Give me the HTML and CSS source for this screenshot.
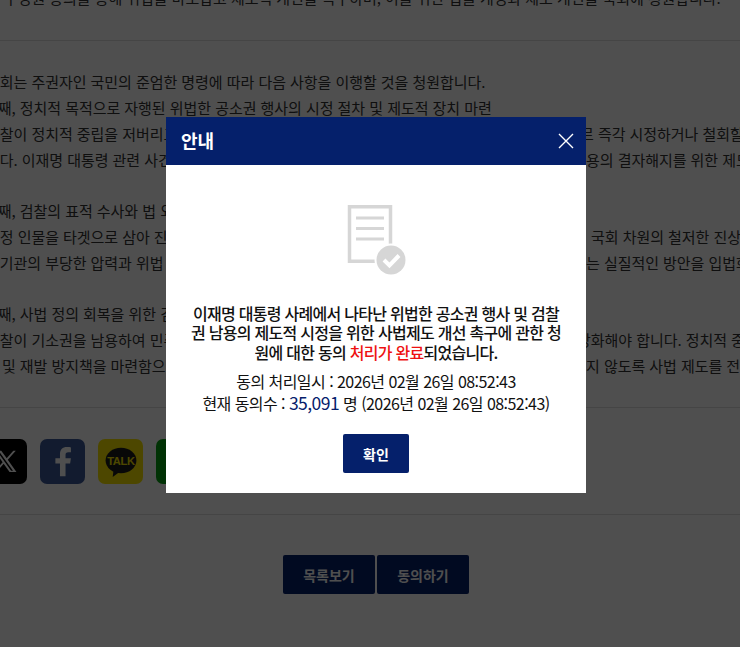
FILE: index.html
```html
<!DOCTYPE html>
<html lang="ko">
<head>
<meta charset="utf-8">
<title>안내</title>
<link rel="stylesheet" href="styles.css">
</head>
<body>
<main class="page">
  <p class="intro">이 구성원 동의를 통해 위법을 바로잡고 제도적 개선을 촉구하며, 이를 위한 법률 개정과 제도 개선을 국회에 청원합니다.</p>
  <hr class="rule">
  <section class="petition">
    <div class="row"><span class="left">국회는 주권자인 국민의 준엄한 명령에 따라 다음 사항을 이행할 것을 청원합니다.</span></div>
    <div class="row"><span class="left pull">첫째, 정치적 목적으로 자행된 위법한 공소권 행사의 시정 절차 및 제도적 장치 마련</span></div>
    <div class="row"><span class="left">검찰이 정치적 중립을 저버리고</span><span class="right shift-a">르 즉각 시정하거나 철회할</span></div>
    <div class="row"><span class="left">니다. 이재명 대통령 관련 사건</span><span class="right">용의 결자해지를 위한 제도</span></div>
    <div class="row gap"><span class="left pull">둘째, 검찰의 표적 수사와 법 외</span></div>
    <div class="row"><span class="left">특정 인물을 타겟으로 삼아 진</span><span class="right shift-b">국회 차원의 철저한 진상</span></div>
    <div class="row"><span class="left">사기관의 부당한 압력과 위법</span><span class="right">는 실질적인 방안을 입법화</span></div>
    <div class="row gap"><span class="left pull">셋째, 사법 정의 회복을 위한 검</span></div>
    <div class="row"><span class="left">검찰이 기소권을 남용하여 민주</span><span class="right shift-c">강화해야 합니다. 정치적 중</span></div>
    <div class="row"><span class="left pull">명 및 재발 방지책을 마련함으</span><span class="right">지 않도록 사법 제도를 전면</span></div>
  </section>
  <hr class="rule rule-share">
  <nav class="share" aria-label="공유">
    <a class="sns sns-x"><svg viewBox="0 0 24 24" width="32" height="32"><path d="M4 3.500h5.200l4.100 5.700 4.900-5.700h1.900l-6 6.900 6.500 9.100h-5.200l-4.400-6.100-5.300 6.100H3.800l6.400-7.300zM6.800 5l9.800 13.500h1.400L8.200 5z" fill="#fff"/></svg></a>
    <a class="sns sns-fb"><svg viewBox="0 0 24 24" width="38" height="38"><path d="M13.600 21v-8h2.900l.5-3.400h-3.400V7.500c0-1 .4-1.700 1.800-1.700H17V2.800c-.4-.1-1.400-.2-2.600-.2-2.600 0-4.300 1.600-4.300 4.400v2.600H7.200V13h2.900v8z" fill="#fff"/></svg></a>
    <a class="sns sns-kakao"><svg viewBox="0 0 32 32" width="34" height="34"><ellipse cx="16" cy="14.500" rx="14.500" ry="12" fill="#1c1c1c"/><path d="M9 23l-.8 7 7-5z" fill="#1c1c1c"/><text x="16" y="18.500" text-anchor="middle" class="talk">TALK</text></svg></a>
    <a class="sns sns-line"></a>
  </nav>
  <hr class="rule rule-actions">
  <div class="actions">
    <button class="btn" type="button">목록보기</button>
    <button class="btn" type="button">동의하기</button>
  </div>
</main>
<div class="overlay"></div>
<div class="modal" role="dialog">
  <header class="modal-head">
    <h2 class="modal-title">안내</h2>
    <svg class="close" viewBox="0 0 16 16" width="16" height="16"><path d="M1 1l14 14M15 1L1 15" stroke="#fff" stroke-width="1.400" fill="none"/></svg>
  </header>
  <div class="modal-body">
    <svg class="doc" viewBox="0 0 60 70" width="60" height="70">
      <rect x="3.500" y="1.750" width="41" height="54.500" fill="none" stroke="#d6d6d6" stroke-width="3.500"/>
      <path d="M10 13h28M10 23.500h28M10 34h28" stroke="#d6d6d6" stroke-width="3" fill="none"/>
      <circle cx="45" cy="55" r="16.500" fill="#fff"/>
      <circle cx="45" cy="55" r="14.500" fill="#d6d6d6"/>
      <path d="M38 55l5.500 5.500 9.500-10" stroke="#fff" stroke-width="4" fill="none"/>
    </svg>
    <p class="msg">이재명 대통령 사례에서 나타난 위법한 공소권 행사 및 검찰권 남용의 제도적 시정을 위한 사법제도 개선 촉구에 관한 청원에 대한 동의 <em class="done">처리가 완료</em>되었습니다.</p>
    <p class="info">동의 처리일시 : 2026년 02월 26일 08:52:43<br>현재 동의수 : <span class="count">35,091</span> 명 (2026년 02월 26일 08:52:43)</p>
    <button class="ok" type="button">확인</button>
  </div>
</div>
</body>
</html>
```
FILE: styles.css
```css
* { box-sizing: border-box; }
html, body { margin: 0; height: 647px; overflow: hidden; background: #fff; }
body { font-family: "Noto Sans CJK KR", "Noto Sans", sans-serif; color: #333; font-variant-ligatures: none; font-feature-settings: "calt" 0, "liga" 0; }
.page { width: 780px; margin-left: -14px; margin-top: -15px; }
.intro { margin: 0; font-size: 15px; line-height: 26px; white-space: nowrap; height: 26px; letter-spacing: -.05px; }
.rule { border: 0; border-top: 1px solid #ddd; margin: 29px 0 0; }
.petition { margin-top: 28px; font-size: 15px; line-height: 26px; letter-spacing: -.05px; }
.row { display: grid; grid-template-columns: 600px auto; height: 26px; white-space: nowrap; }
.gap { margin-top: 25px; }
.pull { margin-left: -2px; }
.shift-a { margin-left: -6px; }
.shift-b { margin-left: 5px; }
.shift-c { margin-left: -9px; }
.rule-share { margin-top: 28px; }
.share { display: flex; gap: 13px; margin: 31px 0 0 -4px; }
.sns { width: 45px; height: 45px; border-radius: 7px; display: flex; align-items: center; justify-content: center; }
.sns-x { background: #000; }
.sns-fb { background: #3b5998; }
.sns-kakao { background: #f7e600; }
.sns-line { background: #06a010; }
.talk { font: 700 10.500px "Liberation Sans", sans-serif; fill: #f7e600; letter-spacing: -.3px; }
.rule-actions { margin-top: 30px; }
.actions { display: flex; gap: 2px; justify-content: center; margin: 40px 0 0; }
.btn { width: 92px; height: 39px; border: 0; border-radius: 2px; background: #05206b; color: #fff; font: 700 14px "Noto Sans CJK KR", sans-serif; }
.overlay { position: fixed; inset: 0; background: rgba(0,0,0,.69); }
.modal { position: fixed; left: 166px; top: 117px; width: 420px; height: 376px; background: #fff; color: #111; }
.modal-head { height: 48px; background: #05206b; display: flex; align-items: center; justify-content: space-between; padding: 0 12px 0 15px; }
.modal-title { margin: 0 0 2px; font-size: 18px; font-weight: 700; color: #fff; }
.modal-body { display: flex; flex-direction: column; align-items: center; padding: 40px 24px 0; text-align: center; }
.doc { display: block; }
.msg { margin: 29px 0 0; font-size: 16px; font-weight: 500; line-height: 19.300px; letter-spacing: -.72px; word-break: break-all; }
.done { font-style: normal; color: #e11; }
.info { margin: 9px 0 0; font-size: 16px; line-height: 21px; letter-spacing: -.55px; }
.count { color: #05206b; font-size: 17.500px; }
.ok { margin-top: 20px; padding-top: 2px; width: 66px; height: 39px; border: 0; border-radius: 2px; background: #05206b; color: #fff; font: 700 14px "Noto Sans CJK KR", sans-serif; }
```
